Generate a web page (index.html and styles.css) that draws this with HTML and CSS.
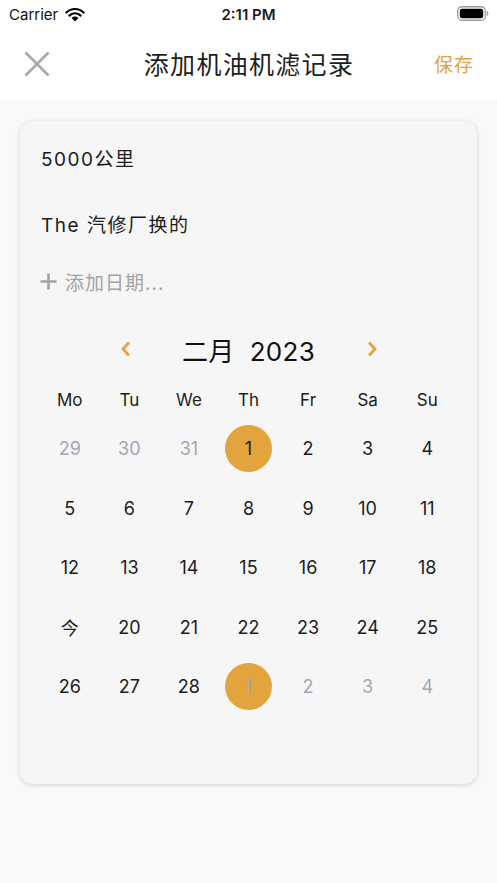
FILE: index.html
```html
<!DOCTYPE html>
<html lang="zh">
<head>
  <meta charset="UTF-8" />
  <meta name="viewport" content="width=device-width, initial-scale=1" />
  <title>添加机油机滤记录</title>
  <link rel="stylesheet" href="styles.css">
</head>
<body>

<div class="status-bar">
  <div class="status-left">
    <span class="carrier">Carrier</span>
    <svg class="wifi" width="20" height="15" viewBox="0 0 20 15">
      <path d="M10 14.5 L6.6 10.9 A4.8 4.8 0 0 1 13.4 10.9 Z" fill="#000"/>
      <path d="M4.3 8.6 A8.1 8.1 0 0 1 15.7 8.6" fill="none" stroke="#000" stroke-width="2.2" stroke-linecap="round"/>
      <path d="M1.4 5.5 A12.3 12.3 0 0 1 18.6 5.5" fill="none" stroke="#000" stroke-width="2.2" stroke-linecap="round"/>
    </svg>
  </div>
  <div class="status-time">2:11 PM</div>
  <div class="status-right">
    <svg width="32" height="15" viewBox="0 0 32 15">
      <rect x="0.75" y="0.75" width="27.5" height="13.5" rx="4" fill="none" stroke="#9a9a9a" stroke-width="1.3"/>
      <rect x="2.8" y="2.8" width="23.4" height="9.4" rx="2.2" fill="#000"/>
      <path d="M29.8 5 Q31.4 5.3 31.4 7.5 Q31.4 9.7 29.8 10 Z" fill="#9a9a9a"/>
    </svg>
  </div>
</div>

<div class="nav-bar">
  <div class="nav-side">
    <svg class="nav-close" width="26" height="26" viewBox="0 0 26 26">
      <path d="M1.5 1.5 L24.5 24.5 M24.5 1.5 L1.5 24.5" stroke="#a8a8a8" stroke-width="2.6" fill="none"/>
    </svg>
  </div>
  <div class="nav-title">添加机油机滤记录</div>
  <div class="nav-side nav-right">
    <span class="nav-save">保存</span>
  </div>
</div>

<div class="content">
  <div class="card">
    <div class="field">5000公里</div>
    <div class="field field-note">The 汽修厂换的</div>
    <div class="add-date">
      <svg width="17" height="17" viewBox="0 0 17 17">
        <path d="M8.5 0.5 V16.5 M0.5 8.5 H16.5" stroke="#a3a3a3" stroke-width="2.6"/>
      </svg>
      <span>添加日期...</span>
    </div>

    <div class="cal-header">
      <svg class="chev" width="12" height="16" viewBox="0 0 12 16">
        <path d="M9 1.5 L3 8 L9 14.5" stroke="#e3a33d" stroke-width="2.8" fill="none"/>
      </svg>
      <div class="cal-title">二月&nbsp;&nbsp;2023</div>
      <svg class="chev" width="12" height="16" viewBox="0 0 12 16">
        <path d="M3 1.5 L9 8 L3 14.5" stroke="#e3a33d" stroke-width="2.8" fill="none"/>
      </svg>
    </div>

    <div class="cal-weekdays">
      <div>Mo</div><div>Tu</div><div>We</div><div>Th</div><div>Fr</div><div>Sa</div><div>Su</div>
    </div>

    <div class="cal-days">
      <div class="day muted">29</div>
      <div class="day muted">30</div>
      <div class="day muted">31</div>
      <div class="day"><span class="selected">1</span></div>
      <div class="day">2</div>
      <div class="day">3</div>
      <div class="day">4</div>

      <div class="day">5</div>
      <div class="day">6</div>
      <div class="day">7</div>
      <div class="day">8</div>
      <div class="day">9</div>
      <div class="day">10</div>
      <div class="day">11</div>

      <div class="day">12</div>
      <div class="day">13</div>
      <div class="day">14</div>
      <div class="day">15</div>
      <div class="day">16</div>
      <div class="day">17</div>
      <div class="day">18</div>

      <div class="day">今</div>
      <div class="day">20</div>
      <div class="day">21</div>
      <div class="day">22</div>
      <div class="day">23</div>
      <div class="day">24</div>
      <div class="day">25</div>

      <div class="day">26</div>
      <div class="day">27</div>
      <div class="day">28</div>
      <div class="day muted"><span class="selected">1</span></div>
      <div class="day muted">2</div>
      <div class="day muted">3</div>
      <div class="day muted">4</div>
    </div>
  </div>
</div>

</body>
</html>
```

FILE: styles.css
```css
body {
  margin: 0;
  font-family: 'Inter', 'Noto Sans CJK SC', sans-serif;
  background: #f9f9f9;
  color: #1c1c1c;
  min-height: 883px;
}
.status-bar {
  height: 30px;
  background: #fff;
  display: flex;
  align-items: center;
  justify-content: space-between;
  padding: 0 8px 0 9px;
  position: relative;
}
.status-left {
  display: flex;
  align-items: center;
  gap: 7px;
  margin-top: -2px;
}
.carrier {
  font-size: 15px;
  color: #111;
}
.status-time {
  position: absolute;
  left: 0;
  right: 0;
  text-align: center;
  font-size: 15px;
  font-weight: 600;
  margin-top: -2px;
  pointer-events: none;
}
.status-right {
  display: flex;
  margin-top: -4px;
}
.nav-bar {
  height: 66px;
  background: #fff;
  display: grid;
  grid-template-columns: 1fr auto 1fr;
  align-items: center;
  padding: 0 23px 4px 24px;
}
.nav-close {
  display: block;
  margin-top: 2px;
}
.nav-right {
  text-align: right;
}
.nav-title {
  font-size: 25px;
  letter-spacing: 1.3px;
  color: #1e1e1e;
}
.nav-save {
  font-size: 19px;
  letter-spacing: 1px;
  color: #e3a33d;
}
.content {
  padding: 21px 20px;
}
.card {
  background: #f6f6f6;
  border-radius: 13px;
  box-shadow: 0 1px 5px rgba(0, 0, 0, 0.16);
  padding: 23px 20px 67px;
}
.field {
  font-size: 19px;
  letter-spacing: 1.5px;
  line-height: 32px;
  padding-left: 1px;
}
.field-note {
  margin-top: 34px;
}
.add-date {
  margin-top: 26px;
  height: 26px;
  display: flex;
  align-items: center;
  gap: 8px;
  color: #a3a3a3;
  font-size: 19px;
  letter-spacing: 1px;
}
.add-date svg {
  margin-top: 1px;
}
.cal-header {
  margin-top: 39px;
  height: 32px;
  display: flex;
  align-items: center;
  justify-content: center;
}
.chev {
  display: block;
  width: 24px;
}
.cal-title {
  width: 222px;
  text-align: center;
  font-size: 26px;
  letter-spacing: 0.3px;
  color: #111;
}
.cal-weekdays {
  margin-top: 23px;
  display: grid;
  grid-template-columns: repeat(7, 1fr);
  font-size: 17px;
  line-height: 24px;
  text-align: center;
}
.cal-days {
  margin-top: 7px;
  display: grid;
  grid-template-columns: repeat(7, 1fr);
  grid-auto-rows: 59.5px;
  font-size: 18px;
}
.day {
  display: flex;
  align-items: center;
  justify-content: center;
}
.day.muted {
  color: #a1a6b9;
}
.selected {
  width: 47px;
  height: 47px;
  border-radius: 50%;
  background: #e3a33d;
  display: flex;
  align-items: center;
  justify-content: center;
}
```
